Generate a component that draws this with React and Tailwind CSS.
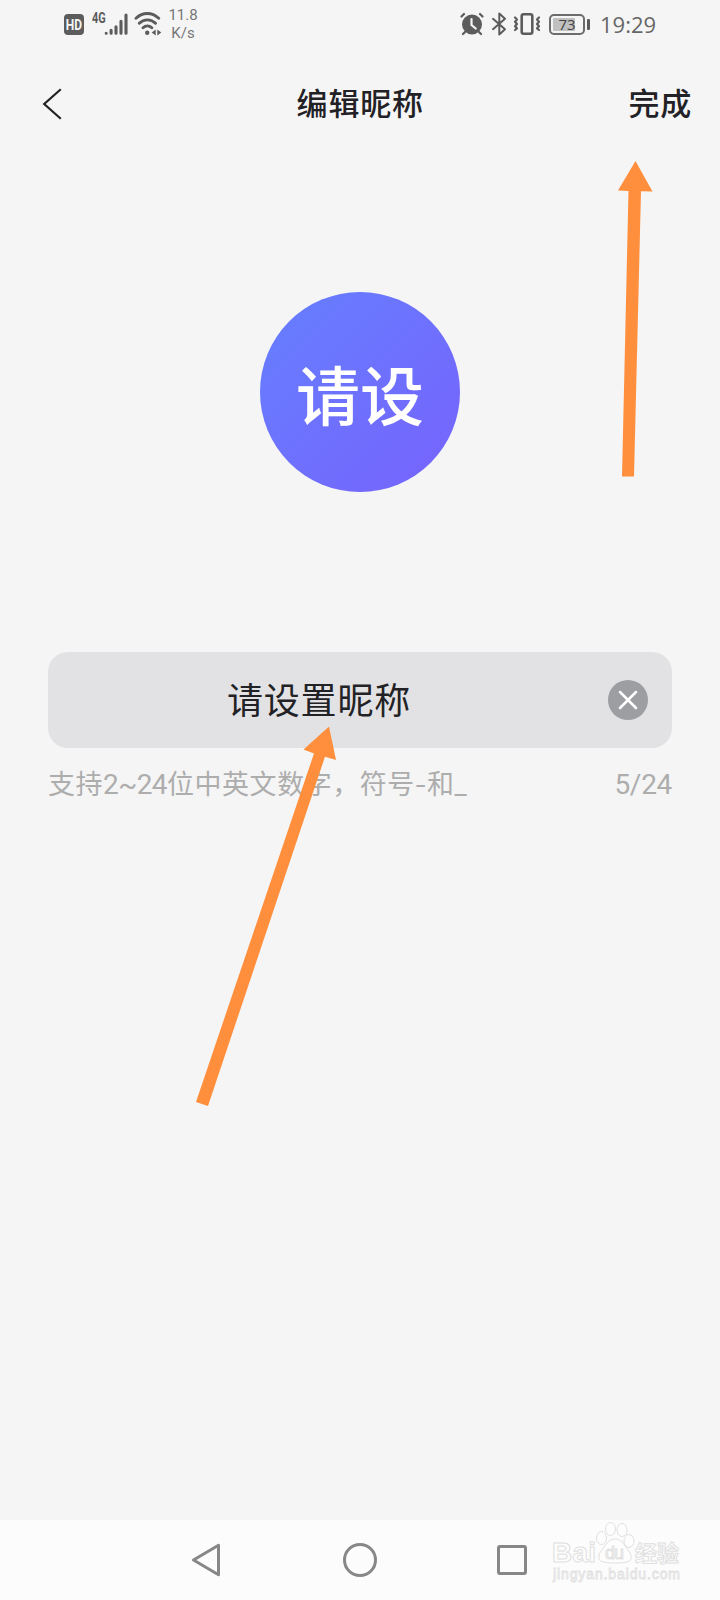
const CJK = "font-['Noto_Sans_CJK_SC',sans-serif]";

function HdIcon() {
  return (
    <div className="mt-[14px] flex h-[21px] w-[20px] items-center justify-center rounded-[4px] bg-[#5c5c5c] font-['Roboto',sans-serif] text-[12px] font-bold leading-none text-[#f5f5f5]">
      <span className="scale-y-[1.15]">HD</span>
    </div>
  );
}

function SignalIcon() {
  return (
    <svg className="mt-[13px] -ml-px h-[23px] w-[24px]" viewBox="0 0 24 23" stroke="#5c5c5c" strokeWidth="3.1" strokeLinecap="round">
      <path d="M2.2 20.3v-.1M7.1 20.3v-3M12 20.3v-6.5M17 20.3v-12M22 20.3V2" />
    </svg>
  );
}

function WifiIcon() {
  return (
    <svg className="ml-[6px] mt-[12px] h-[24px] w-[28px]" viewBox="0 0 28 24" fill="none" stroke="#5c5c5c" strokeWidth="2.9" strokeLinecap="round">
      <path d="M2 6.2C8.8-.1 18-.1 24.700 6.200M5.300 11.300c4.600-4.600 11.600-4.600 16.200 0M9 15.800c2.600-2.400 6.200-2.400 8.800 0" />
      <circle cx="13.200" cy="20.700" r="2.200" fill="#5c5c5c" stroke="none" />
      <path d="M21.700 17.500v6l-4-3zM23.300 17.500v6l4-3z" fill="#5c5c5c" stroke="none" />
    </svg>
  );
}

function AlarmIcon() {
  return (
    <svg className="mt-[12px] h-[24px] w-[24px]" viewBox="0 0 24 24" fill="none" stroke="#5c5c5c" strokeLinecap="round">
      <circle cx="12" cy="12.500" r="10" fill="#5c5c5c" stroke="none" />
      <path d="M1.500 4.500l2.500-2.500M22.500 4.500l-2.500-2.500M5 20l-2 2M19 20l2 2" strokeWidth="2.200" />
      <path d="M11.500 7v6l4.200 3.500" stroke="#f5f5f5" strokeWidth="2.200" />
    </svg>
  );
}

function BluetoothIcon() {
  return (
    <svg className="ml-[7px] mt-[12px] h-[24px] w-[16px]" viewBox="0 0 16 24" fill="none" stroke="#5c5c5c" strokeWidth="2" strokeLinejoin="round" strokeLinecap="round">
      <path d="M2 6.800l12 10.400-5.700 5.300v-21L14 6.800 2 17.200" />
    </svg>
  );
}

function VibrateIcon() {
  return (
    <svg className="ml-[6px] mt-[12px] h-[24px] w-[28px]" viewBox="0 0 28 24" fill="none" stroke="#5c5c5c" strokeLinejoin="round" strokeLinecap="round">
      <rect x="8.700" y="2.300" width="10.600" height="19.400" rx="2" strokeWidth="2.600" />
      <path d="M2 5.500l2 2-2 2.300 2 2.200-2 2.300 2 2-2 1.700M26 5.500l-2 2 2 2.300-2 2.200 2 2.300-2 2 2 1.700" strokeWidth="2.200" />
    </svg>
  );
}

function Battery() {
  return (
    <div className="ml-[8px] mt-[14px] flex h-[21px] items-center">
      <div className="relative flex h-[21px] w-[36px] items-center justify-center rounded-[5px] border-2 border-[#6c6c6c] font-['Open_Sans',sans-serif] text-[15px] leading-none text-[#444]">
        <div className="absolute left-[2px] top-[2px] h-[13px] w-[22px] rounded-[1px] bg-[#c0c0c0]" />
        <span className="relative">73</span>
      </div>
      <div className="ml-[2px] h-[11px] w-[3px] rounded-[1px] bg-[#5c5c5c]" />
    </div>
  );
}

function StatusBar() {
  return (
    <div className="flex h-[48px] items-start pl-[64px] pr-[64px]">
      <HdIcon />
      <span className="ml-[8px] mt-[11px] w-[13px] origin-left scale-x-[.78] font-['Roboto',sans-serif] text-[14px] font-bold leading-[14px] text-[#5c5c5c]">4G</span>
      <SignalIcon />
      <WifiIcon />
      <div className="ml-[6px] mt-[6px] w-[30px] text-center font-['Roboto',sans-serif] text-[15px] leading-[18px] text-[#777]">
        <div>11.8</div>
        <div>K/s</div>
      </div>
      <div className="ml-auto flex items-start">
        <AlarmIcon />
        <BluetoothIcon />
        <VibrateIcon />
        <Battery />
        <span className="ml-[10px] mt-[12px] w-[56px] whitespace-nowrap font-['Open_Sans',sans-serif] text-[22px] leading-[24px] text-[#666]">19:29</span>
      </div>
    </div>
  );
}

function Header() {
  return (
    <header className={`flex h-[112px] items-center justify-between pl-[42px] pr-[28px] ${CJK} text-[31px] font-medium leading-none tracking-[.8px] text-[#222226]`}>
      <svg className="h-[34px] w-[62px]" viewBox="0 0 62 34" fill="none" stroke="#222" strokeWidth="2.200">
        <path d="M18.800 2.200L2.200 17l16.600 14.800" />
      </svg>
      <h1 className="whitespace-nowrap pb-[5px] pr-[12px]">编辑昵称</h1>
      <div className="pb-[5px] text-right">完成</div>
    </header>
  );
}

function NicknameField() {
  return (
    <div className={`px-[48px] ${CJK}`}>
      <div className="flex h-[96px] items-center rounded-[20px] bg-[#e2e2e4] px-[24px]">
        <div className="flex-1 pb-[5px] pr-[42px] text-center text-[36px] leading-none tracking-[.8px] text-[#222226]">请设置昵称</div>
        <div className="flex size-[40px] items-center justify-center rounded-full bg-[#9d9ea1]">
          <svg className="size-[20px]" viewBox="0 0 20 20" stroke="#fff" strokeWidth="2.500" strokeLinecap="round">
            <path d="M2 2l16 16M18 2L2 18" />
          </svg>
        </div>
      </div>
      <div className="mt-[17px] flex justify-between font-['Roboto','Noto_Sans_CJK_SC',sans-serif] leading-[40px] text-[#adadad]">
        <span className="whitespace-nowrap text-[27px] tracking-[.550px]">
          支持<span className="text-[28px] tracking-[-.600px]">2~24</span>位中英文数字，符号<span className="inline-block origin-center scale-x-[1.3] px-[2px]">-</span>和_
        </span>
        <span className="text-[28px] tracking-[-.300px]">5/24</span>
      </div>
    </div>
  );
}

function Watermark() {
  return (
    <div className="absolute left-[552px] top-[1px] h-[78px] w-[140px]">
      <svg className="h-[78px] w-[140px]" viewBox="0 0 140 78" fill="#fdfdfd" stroke="#e0e0e0" strokeWidth="1">
        <text x="0" y="41" fontFamily="Liberation Sans, sans-serif" fontSize="28" fontWeight="700" textLength="44">Bai</text>
        <ellipse cx="49.500" cy="17" rx="5" ry="6.500" />
        <ellipse cx="58.500" cy="8" rx="5" ry="6.500" />
        <ellipse cx="70" cy="9" rx="5" ry="6.500" />
        <ellipse cx="77" cy="20" rx="5" ry="6.500" />
        <path d="M63 18c7 0 9 6 13 11 5 6 4 12-2 12-4 1-7 1-11 1s-7 0-11-1c-6 0-7-7-2-12 4-5 6-11 13-11z" />
        <text x="53" y="38" fontFamily="Liberation Sans, sans-serif" fontSize="18" fontWeight="400" textLength="19">du</text>
        <text x="83" y="40" fontFamily="Noto Sans CJK SC, sans-serif" fontSize="22" fontWeight="700">经验</text>
        <text x="1" y="58" fontFamily="Liberation Sans, sans-serif" fontSize="14" fontWeight="400" strokeWidth=".8" textLength="127">jingyan.baidu.com</text>
      </svg>
    </div>
  );
}

function NavigationBar() {
  return (
    <nav className="relative flex h-[80px] items-center bg-[#fcfcfc] pl-[190px]">
      <svg className="h-[36px] w-[32px]" viewBox="0 0 32 36" fill="none" stroke="#878787" strokeWidth="3" strokeLinejoin="round">
        <path d="M3.500 18L28.500 3.200v29.600z" />
      </svg>
      <div className="ml-[121px] size-[34px] rounded-full border-[3px] border-[#878787]" />
      <div className="ml-[120px] size-[30px] rounded-[3px] border-[3px] border-[#878787]" />
      <Watermark />
    </nav>
  );
}

function Pointers() {
  return (
    <svg className="pointer-events-none absolute left-0 top-0 h-[1600px] w-[720px]" viewBox="0 0 720 1600" fill="#ff8f3c">
      <path d="M635.500 161l17 30.500-11.500-.3L634 476.500h-12L628.500 191l-10.500-.500z" />
      <path d="M329 726.500l7 33.500-11-3.300L208 1106l-12-4L314 753.500l-10.500-4z" />
    </svg>
  );
}

export default function App() {
  return (
    <div className="relative flex h-[1600px] w-[720px] flex-col overflow-hidden bg-[#f5f5f5]">
      <StatusBar />
      <Header />
      <main className="flex-1 pt-[132px]">
        <div className={`mx-auto mb-[160px] flex size-[200px] items-center justify-center rounded-full bg-linear-to-br from-[#647fff] to-[#7662fc] ${CJK} text-[64px] font-medium leading-none text-white`}>
          <span>请设</span>
        </div>
        <NicknameField />
      </main>
      <NavigationBar />
      <Pointers />
    </div>
  );
}
